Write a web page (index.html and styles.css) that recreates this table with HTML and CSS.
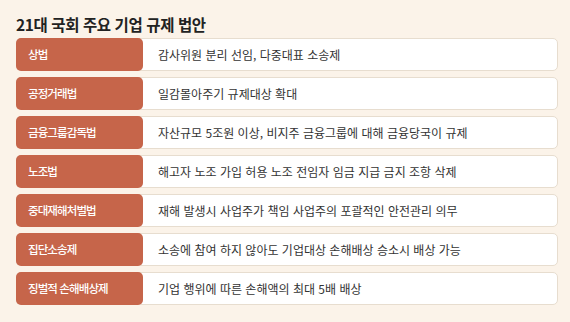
FILE: index.html
```html
<!DOCTYPE html>
<html lang="ko">
<head>
<meta charset="utf-8">
<link rel="stylesheet" href="styles.css">
</head>
<body>
<div class="page">
  <h1 class="title">21대 국회 주요 기업 규제 법안</h1>
  <ul class="list">
    <li class="row"><span class="label">상법</span><span class="desc">감사위원 분리 선임, 다중대표 소송제</span></li>
    <li class="row"><span class="label">공정거래법</span><span class="desc">일감몰아주기 규제대상 확대</span></li>
    <li class="row"><span class="label">금융그룹감독법</span><span class="desc">자산규모 5조원 이상, 비지주 금융그룹에 대해 금융당국이 규제</span></li>
    <li class="row"><span class="label">노조법</span><span class="desc">해고자 노조 가입 허용 노조 전임자 임금 지급 금지 조항 삭제</span></li>
    <li class="row"><span class="label">중대재해처벌법</span><span class="desc">재해 발생시 사업주가 책임 사업주의 포괄적인 안전관리 의무</span></li>
    <li class="row"><span class="label">집단소송제</span><span class="desc">소송에 참여 하지 않아도 기업대상 손해배상 승소시 배상 가능</span></li>
    <li class="row"><span class="label">징벌적 손해배상제</span><span class="desc">기업 행위에 따른 손해액의 최대 5배 배상</span></li>
  </ul>
</div>
</body>
</html>
```
FILE: styles.css
```css
html, body {
  margin: 0;
  padding: 0;
  background: #fbf3e9;
}
.page {
  width: 570px;
  height: 322px;
  box-sizing: border-box;
  padding: 14px 12px 0 16px;
  font-family: "Noto Sans CJK KR", "Noto Sans", sans-serif;
}
.title {
  margin: 0;
  height: 24px;
  font-size: 15.5px;
  line-height: 20px;
  font-weight: 700;
  color: #222;
  letter-spacing: -0.4px;
}
.list {
  list-style: none;
  margin: 0;
  padding: 0;
  display: flex;
  flex-direction: column;
  gap: 6px;
  width: 542px;
}
.row {
  display: flex;
  height: 33px;
  background: #fff;
  border: 1px solid #e7ddcf;
  border-radius: 5px;
  box-sizing: border-box;
}
.label {
  flex: 0 0 127px;
  margin: -1px 0 -1px -1px;
  background: #c6654a;
  color: #fff;
  border-radius: 5px;
  font-size: 11.5px;
  font-weight: 500;
  line-height: 33px;
  padding-left: 12px;
  box-sizing: border-box;
  letter-spacing: -0.9px;
}
.desc {
  padding-left: 15px;
  font-size: 12px;
  line-height: 31px;
  color: #333;
}
```
